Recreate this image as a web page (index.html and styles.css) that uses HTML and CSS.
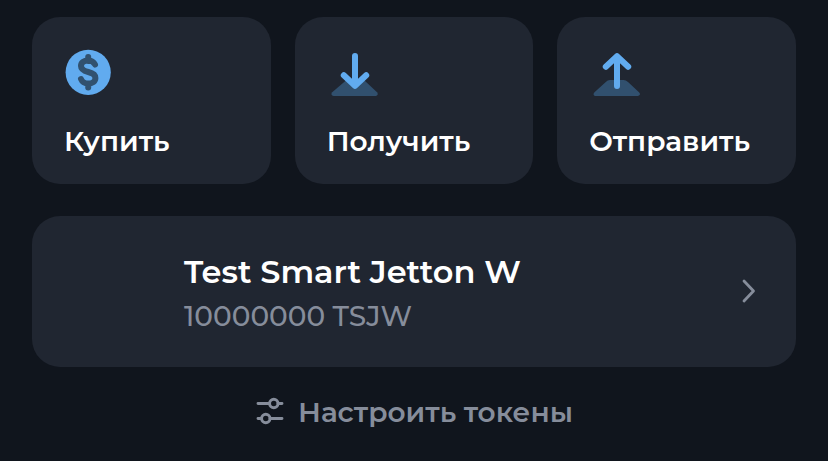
FILE: index.html
```html
<!DOCTYPE html>
<html lang="ru">
<head>
<meta charset="utf-8">
<title>Кошелёк</title>
<link rel="stylesheet" href="styles.css">
</head>
<body>
<main class="wallet">
  <nav class="actions">
    <a class="card action">
      <svg class="action-icon" viewBox="0 0 48 48">
        <circle cx="24.2" cy="24.3" r="22.6" fill="#61abef"/>
        <path d="M31 16.5C29.5 13.500 27.200 12.500 24 12.500c-4 0-7 2.100-7 5.500 0 3.600 3 4.900 7.300 6 4 1 7.100 2.500 7.100 5.900s-3.200 5.600-7.200 5.600c-3.600 0-6-1.500-7.200-4.500M24.200 9v4M24.200 35.500v4" fill="none" stroke="#31516f" stroke-width="6" stroke-linecap="round" stroke-linejoin="round"/>
      </svg>
      <span class="action-label">Купить</span>
    </a>
    <a class="card action">
      <svg class="action-icon inset" viewBox="0 0 48 48">
        <path d="M15.5 32H33L46 44.2c1.4 1.7.8 3.8-1.5 3.8H2.7c-2.3 0-2.900-2.100-1.500-3.800z" fill="#31506e"/>
        <path d="M24 8v25.600M12.800 27.200L24 37.800l11.200-10.600" fill="none" stroke="#61abef" stroke-width="6" stroke-linecap="round" stroke-linejoin="round"/>
      </svg>
      <span class="action-label">Получить</span>
    </a>
    <a class="card action">
      <svg class="action-icon inset" viewBox="0 0 48 48">
        <path d="M12.800 34q1.700-2 4.200-2h13.500q2.500 0 4.500 2l11 10.200c1.800 1.700 1 3.800-1.500 3.800H3c-2.500 0-3.200-2.100-1.500-3.800z" fill="#31506e"/>
        <path d="M24 38V9M12.800 18.800L24 8.200l11.200 10.600" fill="none" stroke="#61abef" stroke-width="6" stroke-linecap="round" stroke-linejoin="round"/>
      </svg>
      <span class="action-label">Отправить</span>
    </a>
  </nav>
  <a class="card token">
    <div class="token-info">
      <div class="token-name">Test Smart Jetton W</div>
      <div class="token-balance">10000000 TSJW</div>
    </div>
    <svg class="chevron" viewBox="0 0 16 26"><path d="M3 3l9.500 10L3 23" fill="none" stroke="#868d9b" stroke-width="2.800" stroke-linecap="round" stroke-linejoin="round"/></svg>
  </a>
  <a class="configure">
    <svg class="sliders" viewBox="0 0 28 28" fill="none" stroke="#868d9b" stroke-width="2.900" stroke-linecap="round">
      <path d="M2 6.500h11M22 6.500h4M2 21.500h3M14 21.500h12"/>
      <circle cx="17.800" cy="6.500" r="4.200"/><circle cx="9.800" cy="21.500" r="4.200"/>
    </svg>
    <span class="configure-label">Настроить токены</span>
  </a>
</main>
</body>
</html>
```

FILE: styles.css
```css
* { box-sizing: border-box; }
body {
  margin: 0;
  background: #10151d;
  color: #fff;
  font-family: Montserrat, Inter, sans-serif;
}
.wallet {
  height: 461px;
  padding: 17px 32px 0;
  overflow: hidden;
}
.actions {
  display: grid;
  grid-template-columns: repeat(3, 1fr);
  gap: 24px;
}
.card {
  background: #202631;
  border-radius: 28px;
}
.action {
  display: flex;
  flex-direction: column;
  height: 167px;
  padding: 31px 32px 0;
}
.action-icon { width: 48px; height: 48px; }
.inset { margin-left: 4px; }
.action-label {
  margin-top: 28px;
  font-size: 28px;
  line-height: 34px;
  font-weight: 600;
  white-space: nowrap;
}
.token {
  display: flex;
  align-items: center;
  justify-content: space-between;
  height: 151px;
  margin-top: 32px;
  padding: 0 39px 0 152px;
}
.token-info { padding-top: 5px; }
.token-name {
  font-size: 32px;
  line-height: 44px;
  font-weight: 600;
  white-space: nowrap;
}
.token-balance {
  font-size: 28px;
  line-height: 44px;
  font-weight: 500;
  color: #868d9b;
  white-space: nowrap;
}
.chevron { width: 16px; height: 26px; margin-bottom: 2px; }
.configure {
  display: flex;
  align-items: center;
  height: 34px;
  margin-top: 28px;
  padding-left: 224px;
  gap: 14px;
  color: #868d9b;
}
.sliders { width: 28px; height: 28px; margin-bottom: 3px; }
.configure-label {
  font-size: 28px;
  line-height: 34px;
  font-weight: 600;
  white-space: nowrap;
}
```
